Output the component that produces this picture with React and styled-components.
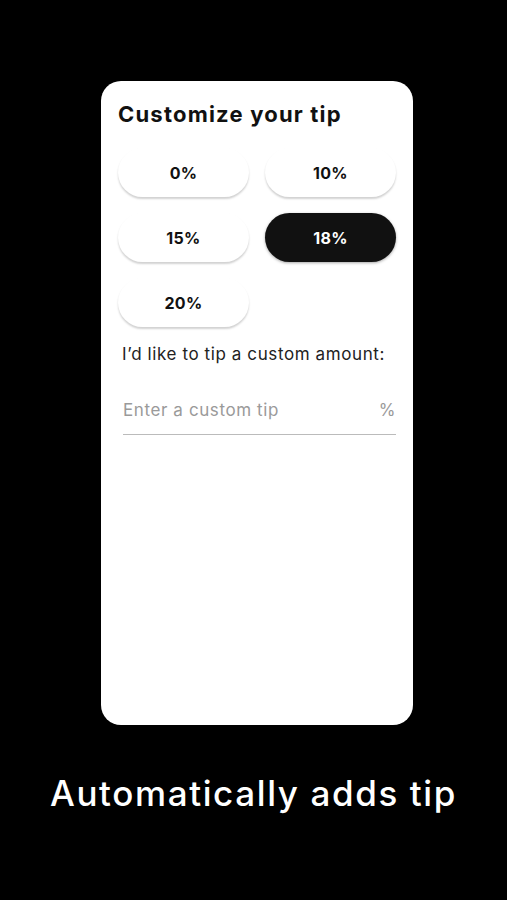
import React from "react";
import styled, { createGlobalStyle } from "styled-components";

const Global = createGlobalStyle`
  html, body { margin: 0; padding: 0; background: #000; }
  body { font-family: Inter, "Noto Sans", sans-serif; }
`;

const Page = styled.div`
  width: 507px;
  height: 900px;
  background: #000;
  display: flex;
  flex-direction: column;
  align-items: flex-start;
  padding: 81px 0 0 101px;
  box-sizing: border-box;
`;

const Card = styled.div`
  width: 312px;
  height: 644px;
  background: #fff;
  border-radius: 20px;
  box-sizing: border-box;
  padding: 18px 17px 0 17px;
  display: flex;
  flex-direction: column;
`;

const Title = styled.h1`
  margin: 0;
  font-size: 22px;
  line-height: 30px;
  font-weight: 700;
  color: #111;
  letter-spacing: 1.2px;
`;

const Grid = styled.div`
  display: grid;
  grid-template-columns: 131px 131px;
  column-gap: 16px;
  row-gap: 16px;
  margin-top: 19px;
`;

const TipButton = styled.button`
  height: 49px;
  border: none;
  border-radius: 25px;
  background: ${(p) => (p.$active ? "#111" : "#fff")};
  color: ${(p) => (p.$active ? "#fff" : "#111")};
  font-family: inherit;
  font-size: 16px;
  font-weight: 700;
  letter-spacing: 0.3px;
  box-shadow: ${(p) =>
    p.$active ? "0 1px 3px rgba(0,0,0,0.35)" : "0 2px 2px rgba(0,0,0,0.18)"};
  cursor: pointer;
`;

const Label = styled.p`
  margin: 16px 0 0 4px;
  font-size: 17px;
  line-height: 22px;
  letter-spacing: 0.6px;
  color: #222;
`;

const InputRow = styled.div`
  display: flex;
  align-items: center;
  justify-content: space-between;
  margin: 34px 0 0 5px;
  width: 273px;
  padding-bottom: 13px;
  border-bottom: 1.5px solid #bbb;
`;

const Placeholder = styled.span`
  font-size: 17px;
  line-height: 22px;
  letter-spacing: 0.6px;
  color: #9a9a9a;
`;

const Footer = styled.div`
  width: 507px;
  margin-left: -101px;
  margin-top: 46px;
  text-align: center;
  color: #fff;
  font-size: 35px;
  font-weight: 500;
  line-height: 44px;
  letter-spacing: 1.6px;
`;

const tips = ["0%", "10%", "15%", "18%", "20%"];

export default function App() {
  return (
    <>
      <Global />
      <Page>
        <Card>
          <Title>Customize your tip</Title>
          <Grid>
            {tips.map((t) => (
              <TipButton key={t} $active={t === "18%"}>
                {t}
              </TipButton>
            ))}
          </Grid>
          <Label>I’d like to tip a custom amount:</Label>
          <InputRow>
            <Placeholder>Enter a custom tip</Placeholder>
            <Placeholder>%</Placeholder>
          </InputRow>
        </Card>
        <Footer>Automatically adds tip</Footer>
      </Page>
    </>
  );
}
